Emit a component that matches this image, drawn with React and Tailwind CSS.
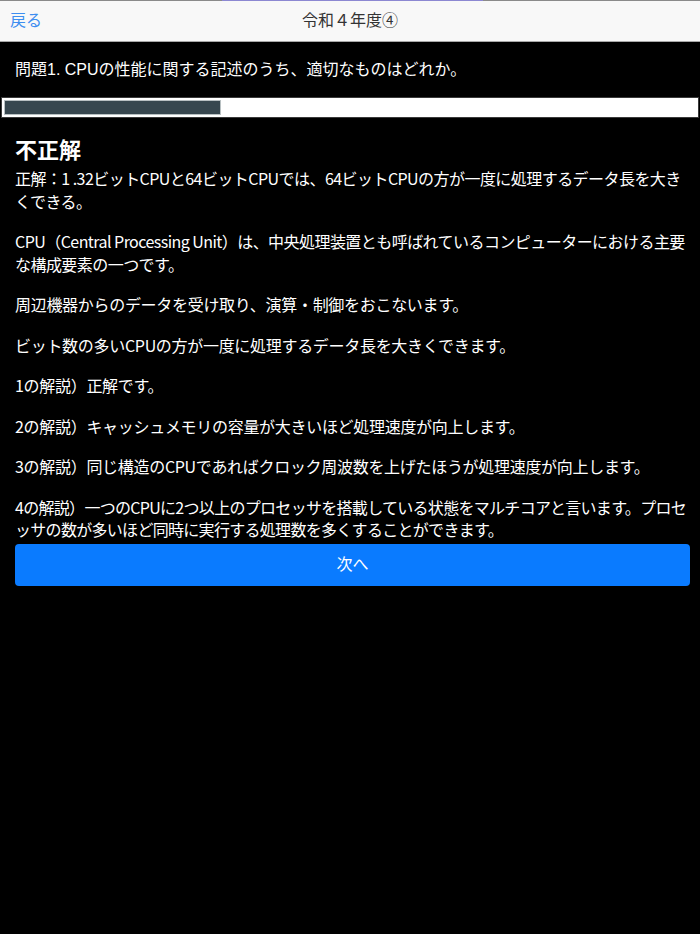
import React from "react";

const paragraphs = [
  { text: "正解：1 .32ビットCPUと64ビットCPUでは、64ビットCPUの方が一度に処理するデータ長を大きくできる。", cls: "tracking-[-0.55px]" },
  { text: "CPU（Central Processing Unit）は、中央処理装置とも呼ばれているコンピューターにおける主要な構成要素の一つです。", cls: "tracking-[-0.55px]" },
  { text: "周辺機器からのデータを受け取り、演算・制御をおこないます。", cls: "tracking-[-0.3px]" },
  { text: "ビット数の多いCPUの方が一度に処理するデータ長を大きくできます。", cls: "tracking-[-0.3px]" },
  { text: "1の解説）正解です。", cls: "tracking-[-0.3px]" },
  { text: "2の解説）キャッシュメモリの容量が大きいほど処理速度が向上します。", cls: "tracking-[-0.3px]" },
  { text: "3の解説）同じ構造のCPUであればクロック周波数を上げたほうが処理速度が向上します。", cls: "tracking-[-0.3px]" },
  { text: "4の解説）一つのCPUに2つ以上のプロセッサを搭載している状態をマルチコアと言います。プロセッサの数が多いほど同時に実行する処理数を多くすることができます。", cls: "tracking-[-0.7px]" },
];

export default function App() {
  return (
    <div className="min-h-[934px] w-[700px] bg-black font-['Liberation_Sans','Noto_Sans_CJK_JP',sans-serif]">
      {/* top hairline */}
      <div className="flex h-px">
        <div className="w-[222px] bg-[#8a8a8a]" />
        <div className="w-[261px] bg-[#8c88d2]" />
        <div className="flex-1 bg-[#8a8a8a]" />
      </div>

      {/* nav bar */}
      <div className="grid h-[41px] grid-cols-[1fr_auto_1fr] items-center border-b border-[#a8a8a8] bg-[#f8f8f8] px-[10px]">
        <button className="justify-self-start text-[16px] text-[#3d8ef0]">戻る</button>
        <div className="text-[16px] text-[#333]">令和４年度④</div>
        <div />
      </div>

      {/* question */}
      <div className="px-[15px] pb-[16px] pt-[17px] text-[16px] leading-[22px] text-white">
        問題1. CPUの性能に関する記述のうち、適切なものはどれか。
      </div>

      {/* progress */}
      <div className="mx-px border border-[#3a3a3a] bg-white p-[2px]">
        <div className="h-[15px] w-[217px] border border-[#b8c0c2] bg-[#37474f]" />
      </div>

      {/* result */}
      <div className="pl-[15px] pr-[10px] pt-[18px] text-white">
        <h2 className="text-[22px] font-bold leading-[30px]">不正解</h2>
        <div className="mt-[1px] flex flex-col gap-[18px] font-['Noto_Sans_CJK_JP',sans-serif] text-[16px] leading-[22.5px]">
          {paragraphs.map((p, i) => (
            <p key={i} className={p.cls}>
              {p.text}
            </p>
          ))}
        </div>
        <button className="mt-[3px] flex h-[42px] w-full items-center justify-center rounded-[4px] bg-[#0a7bff] text-[16px] text-white">
          次へ
        </button>
      </div>
    </div>
  );
}
